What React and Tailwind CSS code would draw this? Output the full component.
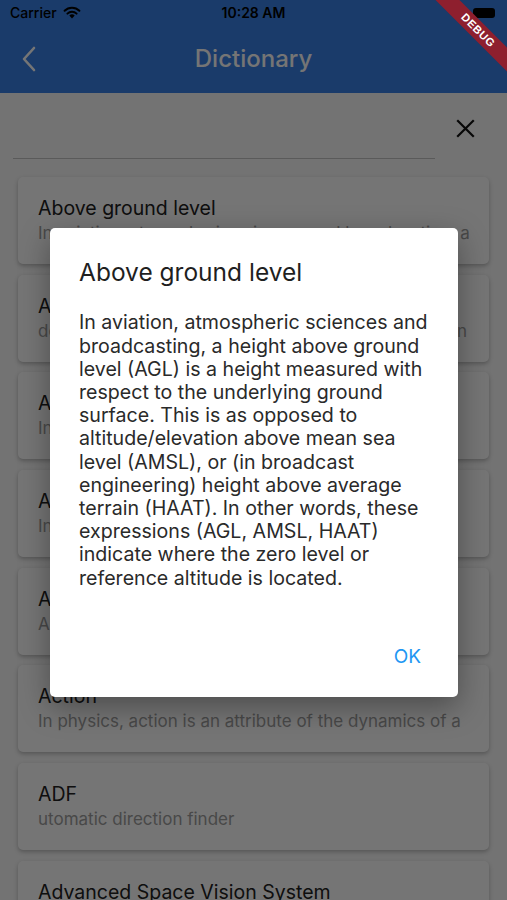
import React from "react";

const cards = [
  { t: "Above ground level", s: "In aviation, atmospheric sciences and broadcasting, a" },
  { t: "Above mean sea level", s: "denotes the elevation of a location above sea level, in" },
  { t: "Absolute altitude", s: "In aviation, the height above the terrain" },
  { t: "Absolute ceiling", s: "In aeronautics, the maximum altitude" },
  { t: "Accelerometer", s: "A device that measures acceleration" },
  { t: "Action", s: "In physics, action is an attribute of the dynamics of a" },
  { t: "ADF", s: "utomatic direction finder" },
  { t: "Advanced Space Vision System", s: "The Advanced Space Vision System is a computer vision" },
];

const lines = [
  "In aviation, atmospheric sciences and",
  "broadcasting, a height above ground",
  "level (AGL) is a height measured with",
  "respect to the underlying ground",
  "surface. This is as opposed to",
  "altitude/elevation above mean sea",
  "level (AMSL), or (in broadcast",
  "engineering) height above average",
  "terrain (HAAT). In other words, these",
  "expressions (AGL, AMSL, HAAT)",
  "indicate where the zero level or",
  "reference altitude is located.",
];

export default function App() {
  return (
    <div className="relative w-[507px] h-[900px] overflow-hidden bg-[#fafafa] font-['Inter','Noto_Sans',sans-serif]">
      <header className="bg-[#3a80e6]">
        <div className="h-[25px] flex items-center justify-between px-[10px] text-black">
          <div className="flex items-center gap-[6px] w-[120px]">
            <span className="text-[14px] font-medium leading-none">Carrier</span>
            <svg width="18" height="13" viewBox="0 0 18 13">
              <path d="M9 12.5 L6.3 9.6 A3.8 3.8 0 0 1 11.7 9.6 Z" fill="black" />
              <path d="M4.4 7.6 A6.6 6.6 0 0 1 13.6 7.6" stroke="black" strokeWidth="2" fill="none" strokeLinecap="round" />
              <path d="M1.6 4.8 A10.4 10.4 0 0 1 16.4 4.8" stroke="black" strokeWidth="2" fill="none" strokeLinecap="round" />
            </svg>
          </div>
          <span className="text-[14px] font-semibold leading-none">10:28 AM</span>
          <div className="w-[120px] flex justify-end">
            <div className="w-[22px] h-[10px] rounded-[3px] bg-black mr-[2px]" />
          </div>
        </div>
        <div className="h-[68px] flex items-center relative">
          <div className="w-[56px] flex justify-center pl-[2px]">
            <svg width="16" height="26" viewBox="0 0 16 26">
              <polyline points="13,2 3,13 13,24" fill="none" stroke="white" strokeWidth="2.6" strokeLinecap="round" strokeLinejoin="round" />
            </svg>
          </div>
          <div className="absolute inset-0 flex items-center justify-center pointer-events-none">
            <span className="text-white text-[24px] font-medium">Dictionary</span>
          </div>
        </div>
      </header>

      <main>
        <div className="flex h-[66px]">
          <div className="ml-[13px] w-[422px] border-b-[1.5px] border-[#c4c4c4]" />
          <div className="w-[60px] flex justify-center">
            <svg className="mt-[21px]" width="29" height="29" viewBox="0 0 29 29">
              <path d="M7 7 L22 22 M22 7 L7 22" stroke="#111" strokeWidth="2.2" strokeLinecap="square" />
            </svg>
          </div>
        </div>
        <div className="flex flex-col gap-[10.7px] px-[18px] pt-[18px]">
          {cards.map((c) => (
            <div key={c.t} className="h-[87px] bg-white rounded-[5px] shadow-[0_2px_4px_rgba(0,0,0,0.25)] px-[20px] pt-[19px] overflow-hidden">
              <div className="text-[19.5px] leading-[24px] text-[#222] whitespace-nowrap overflow-hidden">{c.t}</div>
              <div className="mt-[2px] text-[17px] leading-[22px] text-[#9e9e9e] whitespace-nowrap overflow-hidden">{c.s}</div>
            </div>
          ))}
        </div>
      </main>

      <div className="absolute inset-0 bg-black/[0.54]" />

      <div className="absolute left-[50px] top-[228px] w-[408px] bg-white rounded-[5px] shadow-[0_10px_30px_rgba(0,0,0,0.35)]">
        <div className="px-[29px] pt-[29px]">
          <div className="text-[24.5px] leading-[30px] text-[#1f1f1f]">Above ground level</div>
          <div className="mt-[24.4px] text-[19.6px] leading-[23.2px] text-[#2a2a2a]">
            {lines.map((l) => (
              <span key={l} className="block whitespace-nowrap">{l}</span>
            ))}
          </div>
        </div>
        <div className="h-[78px] mt-[29.4px] flex justify-end pr-[37px]">
          <span className="mt-[26px] text-[19px] leading-[24px] text-[#2196f3]">OK</span>
        </div>
      </div>

      <div className="absolute left-[418px] top-[22px] w-[120px] h-[17px] rotate-45 bg-[#8e1f2e] flex items-center justify-center">
        <span className="text-white text-[11px] font-bold tracking-[0.6px] leading-none font-['Liberation_Sans',sans-serif]">DEBUG</span>
      </div>
    </div>
  );
}
